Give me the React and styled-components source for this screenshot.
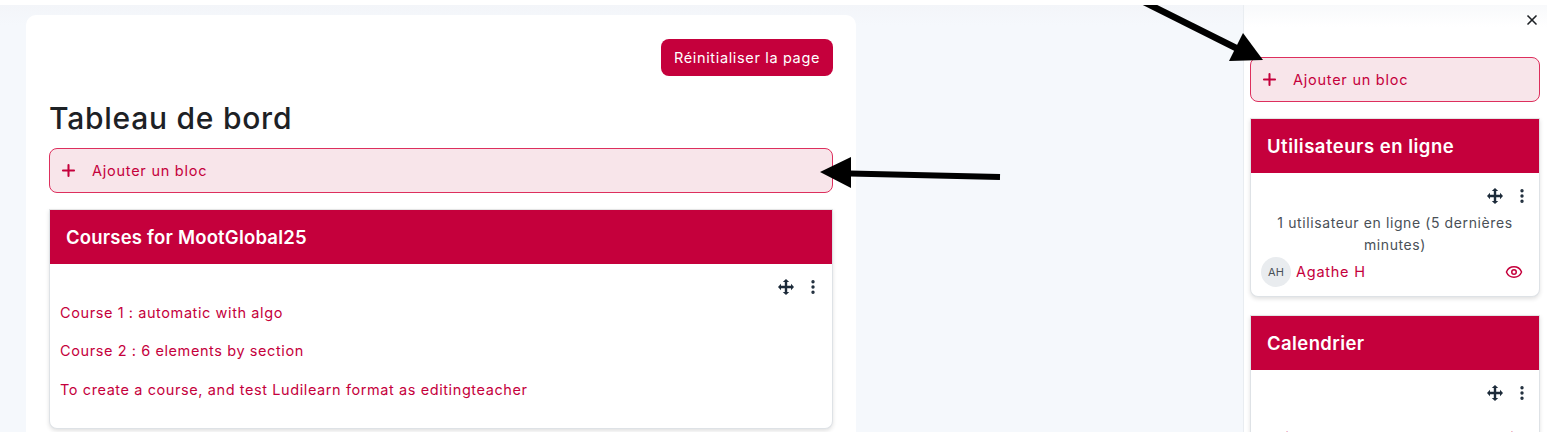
import { createGlobalStyle, styled } from "styled-components";
import { Plus, X, EllipsisVertical, Eye } from "lucide-react";

const crimson = "#c5003c";

const GlobalStyle = createGlobalStyle`
  html, body {
    margin: 0;
    height: 432px;
    overflow: hidden;
    background: #f5f8fc;
    font-family: Inter, "Open Sans", "Liberation Sans", sans-serif;
  }
`;

const Page = styled.div`
  position: relative;
  height: 432px;
  overflow: hidden;
  display: flex;
  justify-content: space-between;
  align-items: flex-start;
  border-top: 5px solid #fff;
  box-sizing: border-box;
  background: linear-gradient(#f3f5f9, #f5f8fc 20px);
`;

const Main = styled.main`
  width: 830px;
  height: 417px;
  margin: 10px 0 0 26px;
  padding: 24px 23px 0;
  box-sizing: border-box;
  background: #fff;
  border-radius: 10px 10px 0 0;
  flex-shrink: 0;
`;

const ButtonRow = styled.div`
  display: flex;
  justify-content: flex-end;
`;

const ResetButton = styled.button`
  height: 37px;
  width: 172px;
  padding: 0;
  border: 0;
  border-radius: 8px;
  background: ${crimson};
  color: #fff;
  font: 400 14.5px Inter, sans-serif;
  letter-spacing: 0.65px;
`;

const Title = styled.h1`
  margin: 24px 0 12px;
  font-size: 30px;
  line-height: 36px;
  font-weight: 500;
  letter-spacing: 0.75px;
  color: #1d2125;
`;

const AddBlock = styled.div`
  display: flex;
  align-items: center;
  gap: 14px;
  height: 45px;
  padding-left: 9px;
  box-sizing: border-box;
  border: 1px solid #dd2f5d;
  border-radius: 8px;
  background: #f8e5ea;
  color: ${crimson};
  font-size: 14.5px;
  letter-spacing: 0.75px;
  margin-bottom: 16px;
`;

const Block = styled.section`
  border: 1px solid #dee2e6;
  border-top-color: #e4e4e4;
  border-radius: 0 0 8px 8px;
  background: #fff;
  box-shadow: 0 2px 4px rgba(0, 0, 0, 0.12);
  margin-bottom: ${(p) => p.$gap || 0}px;
`;

const BlockHead = styled.h2`
  margin: 0;
  height: 54px;
  display: flex;
  align-items: center;
  padding-left: 16px;
  background: ${crimson};
  color: #fff;
  font-size: 18.5px;
  font-weight: 600;
  letter-spacing: ${(p) => p.$tracking}px;
`;

const Tools = styled.div`
  display: flex;
  justify-content: flex-end;
  align-items: center;
  gap: 10px;
  height: 18px;
  padding: 14px ${(p) => p.$right}px 0 0;
  color: #1d2b3a;
`;

const CourseBody = styled.div`
  padding: 7px 10px 29px;
  display: flex;
  flex-direction: column;
  gap: 19.4px;
`;

const CourseLink = styled.a`
  color: ${crimson};
  font-size: 14.5px;
  line-height: 19px;
  letter-spacing: 0.59px;
`;

const Drawer = styled.aside`
  width: 304px;
  height: 427px;
  box-sizing: border-box;
  flex-shrink: 0;
  background: linear-gradient(#f8f9fb, #fff 22px);
  border-left: 1px solid #e9edf1;
  padding: 0 7px 0 6px;
  overflow: hidden;
`;

const DrawerClose = styled.div`
  display: flex;
  justify-content: flex-end;
  height: 52px;
  padding: 7px 0 0 0;
  box-sizing: border-box;
  color: #1d2125;
`;

const OnlineBody = styled.div`
  padding: 7px 10px 9px;
  text-align: center;
  color: #495057;
  font-size: 14px;
  line-height: 22px;
  letter-spacing: 0.6px;
`;

const UserRow = styled.div`
  display: flex;
  align-items: center;
  gap: 5px;
  margin: 1px 6px 0 0;
  color: ${crimson};
  font-size: 14.5px;
  letter-spacing: 0.75px;
`;

const Avatar = styled.span`
  width: 30px;
  height: 30px;
  border-radius: 50%;
  background: #e9ecef;
  color: #495057;
  font-size: 11px;
  letter-spacing: 0;
  display: flex;
  align-items: center;
  justify-content: center;
`;

const WatchIcon = styled(Eye)`
  margin-left: auto;
`;

const MonthNav = styled.div`
  display: flex;
  justify-content: space-between;
  padding: 27px 16px 0 25px;
  font-size: 14px;
  line-height: 18px;
  color: #1d2125;
`;

const MonthLink = styled.span`
  color: ${crimson};
`;

const Arrows = styled.svg`
  position: absolute;
  left: 0;
  top: -5px;
  pointer-events: none;
`;

// lucide has no four-way arrow matching the Moodle glyph
function MoveIcon() {
  return (
    <svg width="16" height="16" viewBox="0 0 16 16" fill="currentColor">
      <path d="M6.800 3h2.400v3.800H13V4.800L16 8l-3 3.200V9.200H9.200V13h2L8 16l-3.200-3h2V9.200H3v2L0 8l3-3.200v2h3.800z" />
      <path d="M4.800 3L8 0l3.200 3z" />
    </svg>
  );
}

function BlockTools({ right }) {
  return (
    <Tools $right={right}>
      <MoveIcon />
      <EllipsisVertical size={18} strokeWidth={2.5} />
    </Tools>
  );
}

function AddBlockButton() {
  return (
    <AddBlock>
      <Plus size={19} strokeWidth={2.6} />
      Ajouter un bloc
    </AddBlock>
  );
}

export default function App() {
  return (
    <>
      <GlobalStyle />
      <Page>
        <Main>
          <ButtonRow>
            <ResetButton>Réinitialiser la page</ResetButton>
          </ButtonRow>
          <Title>Tableau de bord</Title>
          <AddBlockButton />
          <Block>
            <BlockHead $tracking={0.2}>Courses for MootGlobal25</BlockHead>
            <BlockTools right={10} />
            <CourseBody>
              <CourseLink>Course 1 : automatic with algo</CourseLink>
              <CourseLink>Course 2 : 6 elements by section</CourseLink>
              <CourseLink>To create a course, and test Ludilearn format as editingteacher</CourseLink>
            </CourseBody>
          </Block>
        </Main>
        <Drawer>
          <DrawerClose>
            <X size={16} strokeWidth={2.5} />
          </DrawerClose>
          <AddBlockButton />
          <Block $gap={18}>
            <BlockHead $tracking={0.5}>Utilisateurs en ligne</BlockHead>
            <BlockTools right={8} />
            <OnlineBody>
              1 utilisateur en ligne (5 dernières minutes)
              <UserRow>
                <Avatar>AH</Avatar>
                Agathe H
                <WatchIcon size={18} />
              </UserRow>
            </OnlineBody>
          </Block>
          <Block>
            <BlockHead $tracking={0.4}>Calendrier</BlockHead>
            <BlockTools right={8} />
            <MonthNav>
              <MonthLink>◄ Janvier</MonthLink>
              <span>Février 2025</span>
              <MonthLink>Mars ►</MonthLink>
            </MonthNav>
          </Block>
        </Drawer>
        <Arrows width="1547" height="432" viewBox="0 0 1547 432">
          <path d="M1000 177L850 173.500" stroke="#000" strokeWidth="6" />
          <path d="M820 172L851 157V188z" fill="#000" />
          <path d="M1140 0L1240 50" stroke="#000" strokeWidth="6.500" />
          <path d="M1263 60L1229 61L1243 33z" fill="#000" />
        </Arrows>
      </Page>
    </>
  );
}
